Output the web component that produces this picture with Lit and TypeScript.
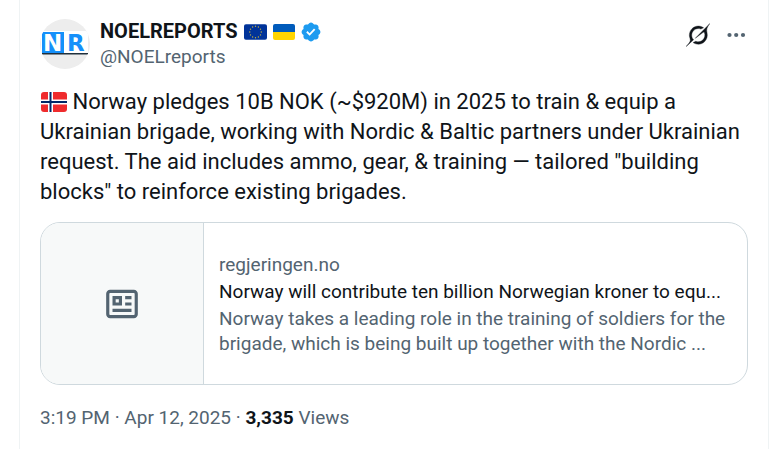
import { LitElement, html, css, svg } from "lit";
import { customElement } from "lit/decorators.js";

const stars = Array.from({ length: 12 }, (_, i) => {
  const a = (i * Math.PI) / 6;
  return { x: 12 + 6 * Math.sin(a), y: 8 - 6 * Math.cos(a) };
});

@customElement("app-root")
export class AppRoot extends LitElement {
  static styles = css`
    :host {
      display: flex;
      min-height: 100vh;
      box-sizing: border-box;
      padding: 0 2px 0 19px;
      background: #fff;
      color: #0f1419;
      font-family: Roboto, "Noto Sans", sans-serif;
      font-size: 19px;
      line-height: 25px;
    }
    * { box-sizing: border-box; }
    article {
      flex: 1;
      min-width: 0;
      padding: 19px 20px 16px;
      border: solid #eff3f4;
      border-width: 0 1px;
    }
    svg { display: block; flex: none; }
    a { color: inherit; text-decoration: none; }
    p { margin: 0; }
    header { display: flex; align-items: flex-start; gap: 10px; }
    .author { flex: 1; min-width: 0; }
    .name { display: flex; align-items: center; gap: 6px; }
    .name a { font-size: 20px; font-weight: 700; }
    .muted { color: #536471; }
    .actions { display: flex; align-items: center; gap: 14px; padding-top: 4px; }
    .actions button {
      border: 0;
      padding: 0;
      background: none;
      color: #536471;
    }
    .actions .grok { color: #0f1419; }
    .text { font-size: 22px; line-height: 30px; margin-top: 18px; }
    .text svg { display: inline-block; vertical-align: -3px; margin-left: 1px; }
    .card {
      display: flex;
      margin-top: 15px;
      border: 1px solid #cfd9de;
      border-radius: 20px;
      overflow: hidden;
    }
    .thumb {
      flex: none;
      width: 163px;
      min-height: 161px;
      display: grid;
      place-items: center;
      background: #f7f9f9;
      border-right: 1px solid #cfd9de;
      color: #536471;
    }
    .summary {
      flex: 1;
      min-width: 0;
      padding: 0 15px;
      display: flex;
      flex-direction: column;
      justify-content: center;
      gap: 2px;
    }
    .meta { margin-top: 20px; color: #536471; }
    .meta strong { color: #0f1419; }
    .logo { font: 700 23px "DejaVu Sans", sans-serif; }
  `;

  render() {
    return html`
      <article>
        <header>
          <a href="#profile" aria-label="NOELREPORTS profile">
            <svg width="50" height="50" viewBox="0 0 50 50">
              <clipPath id="round"><circle cx="25" cy="25" r="25" /></clipPath>
              <g clip-path="url(#round)">
                <rect width="50" height="50" fill="#ededed" />
                <rect x="1" y="12" width="47" height="22" fill="#fff" />
                <rect x="2" y="13" width="22" height="21" fill="#1590fa" />
                <text class="logo" x="3" y="32" fill="#fff">N</text>
                <text class="logo" x="27" y="32" fill="#1590fa">R</text>
                <rect x="2" y="34" width="46" height="1.5" fill="#20303d" />
              </g>
            </svg>
          </a>
          <div class="author">
            <div class="name">
              <a href="#profile">NOELREPORTS</a>
              <svg width="23" height="16" viewBox="0 0 24 16" role="img" aria-label="European Union">
                <rect width="24" height="16" rx="2" fill="#039" />
                ${stars.map((s) => svg`<circle cx=${s.x} cy=${s.y} r="0.7" fill="#c9b43c" />`)}
              </svg>
              <svg width="22" height="16" viewBox="0 0 22 16" role="img" aria-label="Ukraine">
                <path d="M2 0h18a2 2 0 0 1 2 2v6H0V2a2 2 0 0 1 2-2z" fill="#005bbb" />
                <path d="M0 8h22v6a2 2 0 0 1-2 2H2a2 2 0 0 1-2-2z" fill="#ffd500" />
              </svg>
              <svg width="20" height="20" viewBox="1 1 20 20" role="img" aria-label="Verified account">
                <path fill="#1d9bf0" d="M20.396 11c-.018-.646-.215-1.275-.57-1.816-.354-.54-.852-.972-1.438-1.246.223-.607.27-1.264.14-1.897-.131-.634-.437-1.218-.882-1.687-.47-.445-1.053-.75-1.687-.882-.633-.13-1.29-.083-1.897.14-.273-.587-.704-1.086-1.245-1.44S11.647 1.62 11 1.604c-.646.017-1.273.213-1.813.568s-.969.854-1.24 1.44c-.608-.223-1.267-.272-1.902-.14-.635.13-1.22.436-1.69.882-.445.47-.749 1.055-.878 1.688-.13.633-.08 1.29.144 1.896-.587.274-1.087.705-1.443 1.245-.356.54-.555 1.17-.574 1.817.02.647.218 1.276.574 1.817.356.54.856.972 1.443 1.245-.224.606-.274 1.263-.144 1.896.13.634.433 1.218.877 1.688.47.443 1.054.747 1.687.878.633.132 1.29.084 1.897-.136.274.586.705 1.084 1.246 1.439.54.354 1.17.551 1.816.569.647-.016 1.276-.213 1.817-.567s.972-.854 1.245-1.44c.604.239 1.266.296 1.903.164.636-.132 1.22-.447 1.68-.907.46-.46.776-1.044.908-1.681s.075-1.299-.165-1.903c.586-.274 1.084-.705 1.439-1.246.354-.54.551-1.17.569-1.816zM9.662 14.85l-3.429-3.428 1.293-1.302 2.072 2.072 4.4-4.794 1.347 1.246z" />
              </svg>
            </div>
            <a class="muted" href="#profile">@NOELreports</a>
          </div>
          <div class="actions">
            <button class="grok" aria-label="Grok actions">
              <svg width="24" height="24" viewBox="0 0 33 32">
                <path fill="currentColor" stroke="currentColor" stroke-width="0.5" d="M12.745 20.54l10.97-8.19c.539-.4 1.307-.244 1.564.38 1.349 3.288.746 7.241-1.938 9.955-2.683 2.714-6.417 3.31-9.83 1.954l-3.728 1.745c5.347 3.697 11.84 2.782 15.898-1.324 3.219-3.255 4.216-7.692 3.284-11.693l.008.009c-1.351-5.878.332-8.227 3.782-13.031L33 0l-4.54 4.59v-.014L12.743 20.544m-2.263 1.987c-3.837-3.707-3.175-9.446.1-12.755 2.42-2.449 6.388-3.448 9.852-1.979l3.72-1.737c-.67-.49-1.53-1.017-2.515-1.387-4.455-1.854-9.789-.931-13.41 2.728-3.483 3.523-4.579 8.94-2.697 13.561 1.405 3.454-.899 5.898-3.22 8.364C1.49 30.2.666 31.074 0 32l10.478-9.466" />
              </svg>
            </button>
            <button aria-label="More">
              <svg width="24" height="24" viewBox="0 0 24 24" fill="currentColor">
                <circle cx="5.5" cy="12" r="2.1" /><circle cx="12.2" cy="12" r="2.1" /><circle cx="19" cy="12" r="2.1" />
              </svg>
            </button>
          </div>
        </header>
        <p class="text">
          <svg width="26" height="20" viewBox="0 0 26 20" role="img" aria-label="Norway">
            <rect width="26" height="20" rx="3" fill="#ef2b2d" />
            <path fill="#fff" d="M7 0h5v20H7zM0 7.500h26v5H0z" />
            <path fill="#002868" d="M8.500 0h2v20h-2zM0 9h26v2H0z" />
          </svg>
          Norway pledges 10B NOK (~$920M) in 2025 to train &amp; equip a Ukrainian brigade, working with Nordic &amp; Baltic partners under Ukrainian request. The aid includes ammo, gear, &amp; training — tailored "building blocks" to reinforce existing brigades.
        </p>
        <a class="card" href="#article">
          <div class="thumb">
            <svg width="38" height="38" viewBox="0 0 24 24" fill="currentColor">
              <path d="M1.998 5.5c0-1.38 1.119-2.5 2.5-2.5h15c1.381 0 2.5 1.12 2.5 2.5v13c0 1.38-1.119 2.5-2.5 2.5h-15c-1.381 0-2.5-1.12-2.5-2.5v-13zm2.5-.5c-.276 0-.5.22-.5.5v13c0 .28.224.5.5.5h15c.276 0 .5-.22.5-.5v-13c0-.28-.224-.5-.5-.5h-15zM6 7h6v6H6V7zm2 2v2h2V9H8zm10 0h-4V7h4v2zm0 4h-4v-2h4v2zm-.002 4h-12v-2h12v2z" />
            </svg>
          </div>
          <div class="summary">
            <div class="muted">regjeringen.no</div>
            <div>Norway will contribute ten billion Norwegian kroner to equ...</div>
            <div class="muted">Norway takes a leading role in the training of soldiers for the brigade, which is being built up together with the Nordic ...</div>
          </div>
        </a>
        <div class="meta">
          <a href="#time">3:19 PM · Apr 12, 2025</a> · <strong>3,335</strong> Views
        </div>
      </article>
    `;
  }
}
